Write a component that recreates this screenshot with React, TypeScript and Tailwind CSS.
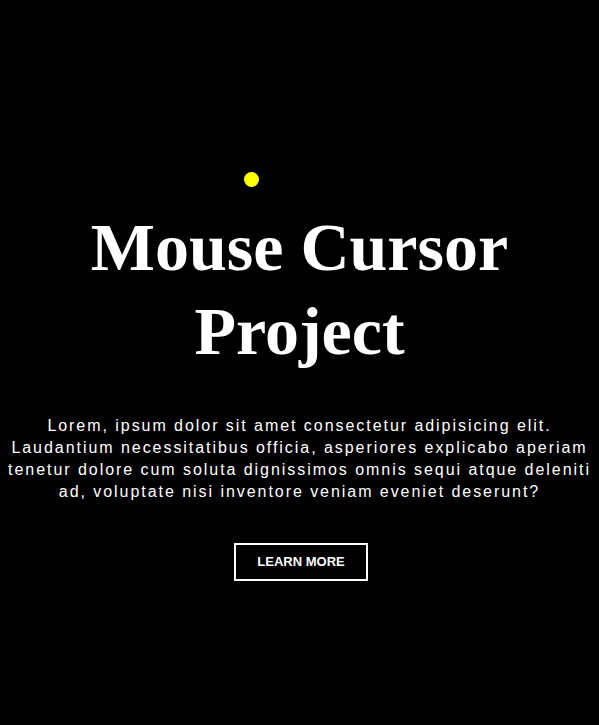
export default function App() {
  return (
    <div className="relative h-[725px] w-full bg-black overflow-hidden">
      <div className="absolute left-[244px] top-[172px] h-[15px] w-[15px] rounded-full bg-[#ffff00]" />
      <div className="flex flex-col items-center pt-[205px] px-[2px]">
        <h1 className="text-center text-white font-bold text-[68px] leading-[84px] [font-family:'Liberation_Serif',serif]">
          Mouse Cursor
          <br />
          Project
        </h1>
        <p className="mt-[42px] text-center text-white text-[16px] leading-[22px] tracking-[1.95px] [font-family:'Liberation_Sans',Arial,sans-serif]">
          Lorem, ipsum dolor sit amet consectetur adipisicing elit. Laudantium necessitatibus officia, asperiores explicabo aperiam tenetur dolore cum soluta dignissimos omnis sequi atque deleniti ad, voluptate nisi inventore veniam eveniet deserunt?
        </p>
        <button className="mt-[40px] ml-[3px] h-[38px] w-[134px] border-2 border-white text-white font-bold text-[13px] uppercase [font-family:'Liberation_Sans',Arial,sans-serif]">
          Learn More
        </button>
      </div>
    </div>
  );
}
